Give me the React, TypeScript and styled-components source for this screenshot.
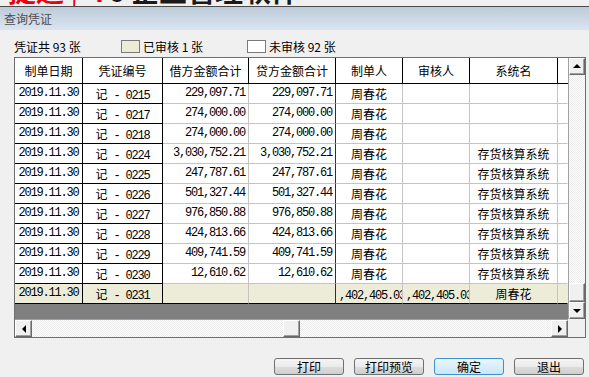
import React from 'react';
import styled, { createGlobalStyle } from 'styled-components';

const CJK = `"Noto Sans CJK SC", "DejaVu Sans", sans-serif`;
const MONO = `"Liberation Mono", "Noto Sans CJK SC", monospace`;

const GlobalStyle = createGlobalStyle`
  html, body {
    margin: 0;
    padding: 0;
  }
  body {
    width: 589px;
    height: 377px;
    overflow: hidden;
    background: #f0f0f0;
    font-family: ${CJK};
    font-size: 12px;
    color: #000;
  }
`;

const LogoStrip = styled.div`
  height: 6px;
  overflow: hidden;
  border-bottom: 1px solid #4a4a4a;
`;

const LogoText = styled.div`
  margin-top: -24px;
  padding-left: 8px;
  font-size: 28px;
  line-height: 28px;
  font-weight: bold;
  white-space: nowrap;
  color: #1a1a1a;
`;

const Red = styled.span<{ $thin?: boolean }>`
  color: #e60012;
  font-weight: ${({ $thin }) => ($thin ? 'normal' : 'bold')};
`;

const TitleBar = styled.div`
  height: 23px;
  line-height: 23px;
  padding-left: 4px;
  background: linear-gradient(#bdcbda, #dae5f1);
  color: #4d4d4d;
  font-size: 12px;
`;

const InfoRow = styled.div`
  display: flex;
  align-items: center;
  height: 13px;
  margin-top: 10px;
  padding-left: 14px;
  line-height: 13px;
`;

const Count = styled.div`
  width: 107px;
`;

const Legend = styled.div<{ $w?: number }>`
  display: flex;
  align-items: center;
  gap: 3px;
  width: ${({ $w }) => ($w ? `${$w}px` : 'auto')};
`;

const Swatch = styled.div<{ $color: string }>`
  width: 17px;
  height: 11px;
  border: 1px solid #7a7a7a;
  background: ${({ $color }) => $color};
`;

const Frame = styled.div`
  display: grid;
  grid-template-columns: 553px 17px;
  grid-template-rows: 261px 18px;
  width: 570px;
  margin: 4px 0 0 14px;
  border: 1px solid #6f6f6f;
`;

const GridBody = styled.div`
  display: flex;
  flex-direction: column;
  overflow: hidden;
`;

const Row = styled.div<{ $bg?: string }>`
  display: flex;
  background: ${({ $bg }) => $bg || '#fff'};
`;

const Cell = styled.div<{
  $w: number;
  $align: string;
  $vline: string;
  $hline: string;
  $mono?: boolean;
}>`
  flex: none;
  box-sizing: border-box;
  width: ${({ $w }) => $w}px;
  height: 20px;
  line-height: 19px;
  padding: 0 3px;
  border-right: 1px solid ${({ $vline }) => $vline};
  border-bottom: 1px solid ${({ $hline }) => $hline};
  text-align: ${({ $align }) => $align};
  white-space: nowrap;
  overflow: hidden;
  font-family: ${({ $mono }) => ($mono ? MONO : CJK)};
  font-size: 12px;
  letter-spacing: ${({ $mono }) => ($mono ? '-1.2px' : '0')};
`;

const HeadCell = styled.div<{ $w: number; $last?: boolean }>`
  flex: none;
  box-sizing: border-box;
  width: ${({ $w }) => $w}px;
  height: 26px;
  line-height: 25px;
  text-align: center;
  border-right: ${({ $last }) => ($last ? 'none' : '1px solid #000')};
  border-bottom: 1px solid #000;
  background: #fff;
  white-space: nowrap;
  overflow: hidden;
`;

const Han = styled.span`
  font-family: ${CJK};
  letter-spacing: 0;
`;

const Amount = styled.span`
  font-family: ${MONO};
  letter-spacing: -1.2px;
`;

const GrayFill = styled.div`
  flex: 1;
  background: #808080;
`;

const VScroll = styled.div`
  display: flex;
  flex-direction: column;
  border-left: 1px solid #a0a0a0;
`;

const Track = styled.div`
  flex: 1;
  display: flex;
  flex-direction: column;
  justify-content: flex-end;
  background: repeating-conic-gradient(#ffffff 0 25%, #ebebeb 0 50%) 0 0 / 2px 2px;
`;

const ScrollBtn = styled.div<{ $size?: number }>`
  flex: none;
  box-sizing: border-box;
  width: ${({ $size }) => $size || 16}px;
  height: ${({ $size }) => $size || 17}px;
  display: flex;
  align-items: center;
  justify-content: center;
  background: #f0f0f0;
  border: 1px solid;
  border-color: #ffffff #696969 #696969 #ffffff;
  box-shadow: inset -1px -1px #a0a0a0;
`;

const VThumb = styled(ScrollBtn)`
  width: 16px;
  height: 19px;
`;

const HScroll = styled.div`
  display: flex;
  border-top: 1px solid #a0a0a0;
`;

const HTrack = styled.div`
  flex: 1;
  display: flex;
  background: repeating-conic-gradient(#ffffff 0 25%, #ebebeb 0 50%) 0 0 / 2px 2px;
`;

const HThumb = styled(ScrollBtn)<{ $offset: number }>`
  width: 17px;
  height: 17px;
  margin-left: ${({ $offset }) => $offset}px;
`;

const Corner = styled.div`
  background: #f0f0f0;
`;

const Arrow = styled.div<{ $dir: 'up' | 'down' | 'left' | 'right' }>`
  width: 0;
  height: 0;
  border: 4px solid transparent;
  ${({ $dir }) =>
    $dir === 'up'
      ? 'border-bottom-color: #000; border-top-width: 0; margin-top: -1px;'
      : $dir === 'down'
      ? 'border-top-color: #000; border-bottom-width: 0;'
      : $dir === 'left'
      ? 'border-right-color: #000; border-left-width: 0;'
      : 'border-left-color: #000; border-right-width: 0;'}
`;

const ButtonBar = styled.div`
  display: flex;
  justify-content: flex-end;
  gap: 10px;
  margin-top: 20px;
  padding-right: 5px;
`;

const Button = styled.button<{ $primary?: boolean }>`
  width: 70px;
  height: 17px;
  padding: 0;
  font-family: ${CJK};
  font-size: 12px;
  line-height: 15px;
  color: #000;
  border-radius: 3px;
  border: 1px solid ${({ $primary }) => ($primary ? '#3c8fd0' : '#707070')};
  background: ${({ $primary }) =>
    $primary
      ? 'linear-gradient(#eaf6fd, #c9e6f7)'
      : 'linear-gradient(#f4f4f4 0%, #ebebeb 50%, #dddddd 51%, #cfcfcf 100%)'};
`;

type Col = { w: number; align: string; vline: string; hline: string; mono?: boolean };

const DARK = '#000';
const LIGHT = '#c4c4c4';

const cols: Col[] = [
  { w: 68, align: 'center', vline: DARK, hline: DARK, mono: true },
  { w: 80, align: 'center', vline: DARK, hline: DARK, mono: true },
  { w: 86, align: 'right', vline: LIGHT, hline: LIGHT, mono: true },
  { w: 87, align: 'right', vline: '#303030', hline: LIGHT, mono: true },
  { w: 67, align: 'left', vline: LIGHT, hline: LIGHT },
  { w: 67, align: 'left', vline: LIGHT, hline: LIGHT },
  { w: 88, align: 'center', vline: LIGHT, hline: LIGHT },
  { w: 10, align: 'left', vline: 'transparent', hline: LIGHT },
];

const headers = ['制单日期', '凭证编号', '借方金额合计', '贷方金额合计', '制单人', '审核人', '系统名', ''];

const SYS = '存货核算系统';
const rows: [string, string, string, string][] = [
  ['0215', '229,097.71', '229,097.71', ''],
  ['0217', '274,000.00', '274,000.00', ''],
  ['0218', '274,000.00', '274,000.00', ''],
  ['0224', '3,030,752.21', '3,030,752.21', SYS],
  ['0225', '247,787.61', '247,787.61', SYS],
  ['0226', '501,327.44', '501,327.44', SYS],
  ['0227', '976,850.88', '976,850.88', SYS],
  ['0228', '424,813.66', '424,813.66', SYS],
  ['0229', '409,741.59', '409,741.59', SYS],
  ['0230', '12,610.62', '12,610.62', SYS],
];

const Voucher: React.FC<{ no: string }> = ({ no }) => (
  <>
    <Han>记</Han> - {no}
  </>
);

const Maker = styled.span`
  display: inline-block;
  width: 100%;
  text-align: center;
`;

const renderRow = (cells: React.ReactNode[], key: string, bg?: string, lastRow?: boolean) => (
  <Row key={key} $bg={bg}>
    {cols.map((c, i) => (
      <Cell
        key={i}
        $w={c.w}
        $align={c.align}
        $vline={c.vline}
        $hline={lastRow ? DARK : c.hline}
        $mono={c.mono}
      >
        {cells[i]}
      </Cell>
    ))}
  </Row>
);

const total = <Amount>,402,405.03</Amount>;

export default function App() {
  return (
    <>
      <GlobalStyle />
      <LogoStrip>
        <LogoText>
          <Red>捷通</Red>&nbsp;
          <Red $thin>|</Red>&nbsp;&nbsp;<Red>T</Red>6 企业管理软件
        </LogoText>
      </LogoStrip>
      <TitleBar>查询凭证</TitleBar>

      <InfoRow>
        <Count>凭证共 93 张</Count>
        <Legend $w={126}>
          <Swatch $color="#ecebd6" />
          已审核 1 张
        </Legend>
        <Legend>
          <Swatch $color="#ffffff" />
          未审核 92 张
        </Legend>
      </InfoRow>

      <Frame>
        <GridBody>
          <Row>
            {cols.map((c, i) => (
              <HeadCell key={i} $w={c.w} $last={i === cols.length - 1}>
                {headers[i]}
              </HeadCell>
            ))}
          </Row>
          {rows.map(([no, debit, credit, sys]) =>
            renderRow(
              ['2019.11.30', <Voucher no={no} />, debit, credit, <Maker>周春花</Maker>, '', sys, ''],
              no
            )
          )}
          {renderRow(
            ['2019.11.30', <Voucher no="0231" />, '', '', total, total, '周春花', ''],
            '0231',
            '#edecd8',
            true
          )}
          <GrayFill />
        </GridBody>

        <VScroll>
          <ScrollBtn>
            <Arrow $dir="up" />
          </ScrollBtn>
          <Track>
            <VThumb />
          </Track>
          <ScrollBtn>
            <Arrow $dir="down" />
          </ScrollBtn>
        </VScroll>

        <HScroll>
          <ScrollBtn $size={17}>
            <Arrow $dir="left" />
          </ScrollBtn>
          <HTrack>
            <HThumb $offset={251} />
          </HTrack>
          <ScrollBtn $size={17}>
            <Arrow $dir="right" />
          </ScrollBtn>
        </HScroll>
        <Corner />
      </Frame>

      <ButtonBar>
        <Button>打印</Button>
        <Button>打印预览</Button>
        <Button $primary>确定</Button>
        <Button>退出</Button>
      </ButtonBar>
    </>
  );
}
